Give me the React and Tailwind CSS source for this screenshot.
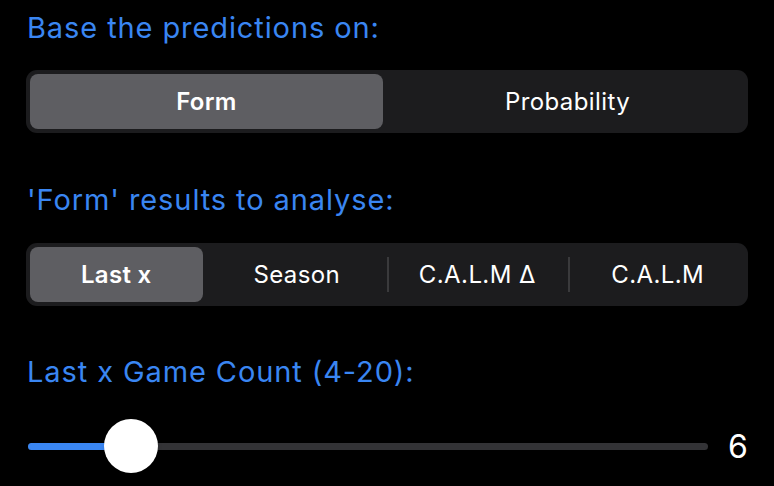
import React from 'react';

const font = { fontFamily: 'Inter, "Noto Sans", sans-serif' };

const Heading = ({ children, className = '' }) => (
    <h2 className={`text-[29px] leading-[34px] tracking-[0.9px] text-[#3a86f2] pl-[1px] ${className}`}>{children}</h2>
);

const Segmented = ({ items, selected, className = '' }) => (
    <div className={`flex h-[63px] rounded-[11px] bg-[#1c1c1e] ${className}`}>
        {items.map((item, i) => {
            const active = i === selected;
            const showDivider = i > 0 && i !== selected && i - 1 !== selected;
            return (
                <div key={item} className="relative flex flex-1 items-center justify-center">
                    {showDivider && (
                        <div className="absolute left-0 top-[14px] h-[35px] w-[2px] bg-[#3a3a3c]" />
                    )}
                    {active ? (
                        <div className="m-[4px] flex h-[55px] w-full items-center justify-center rounded-[8px] bg-[#5e5e62] text-[24px] font-semibold tracking-[0.3px] text-white">
                            {item}
                        </div>
                    ) : (
                        <span className="text-[24px] font-normal tracking-[0.4px] text-white">{item}</span>
                    )}
                </div>
            );
        })}
    </div>
);

const App = () => {
    return (
        <div className="h-[486px] w-[774px] overflow-hidden bg-black px-[26px] pt-[11px]" style={font}>
            <Heading>Base the predictions on:</Heading>
            <Segmented className="mt-[25px]" items={['Form', 'Probability']} selected={0} />

            <Heading className="mt-[50px]">'Form' results to analyse:</Heading>
            <Segmented className="mt-[26px]" items={['Last x', 'Season', 'C.A.L.M Δ', 'C.A.L.M']} selected={0} />

            <Heading className="mt-[49px]">Last x Game Count (4-20):</Heading>

            {/* Slider */}
            <div className="mt-[29px] flex h-[56px] items-center pl-[2px]">
                <div className="relative h-[7px] w-[680px] rounded-full bg-[#333336]">
                    <div className="h-full w-[103px] rounded-full bg-[#3a86f2]" />
                    <div className="absolute left-[76px] top-1/2 h-[54px] w-[54px] -translate-y-1/2 rounded-full bg-white shadow-md" />
                </div>
                <span className="ml-[20px] mt-[2px] text-[32px] text-white">6</span>
            </div>
        </div>
    );
};

export default App;
